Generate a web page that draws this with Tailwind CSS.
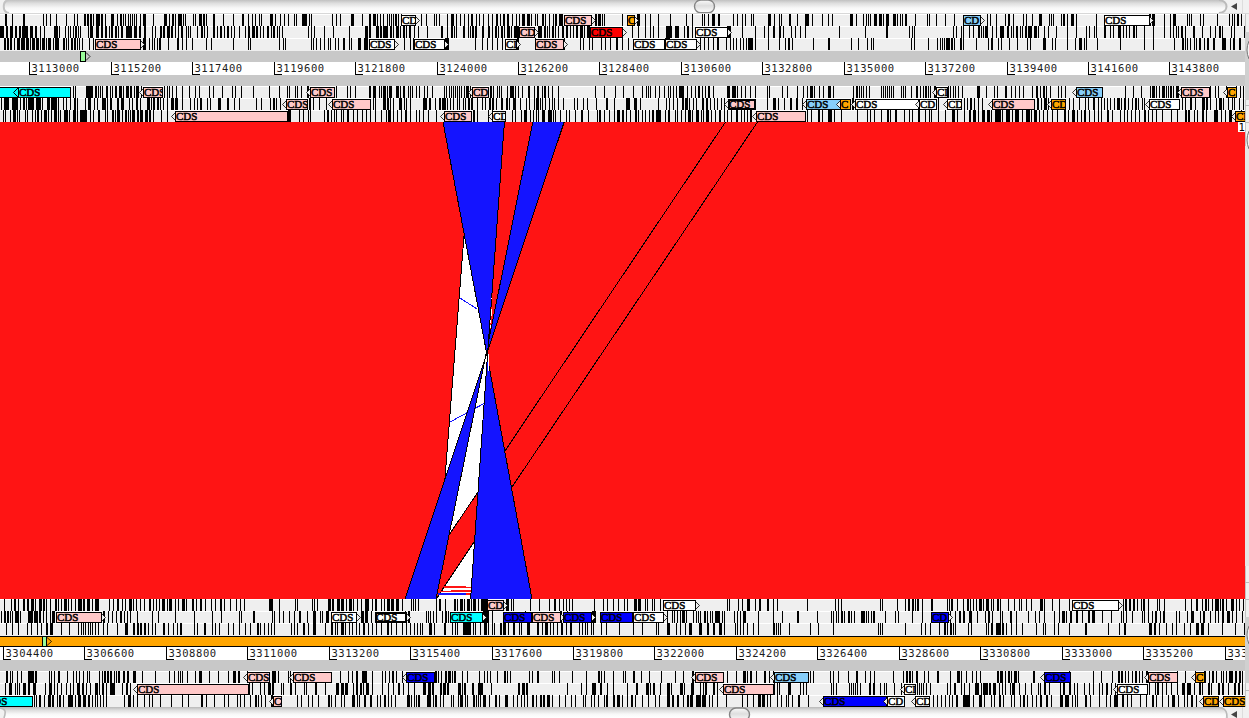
<!DOCTYPE html>
<html lang="en">
<head>
<meta charset="utf-8">
<title>Genome comparison</title>
<script src="https://cdn.jsdelivr.net/npm/@tailwindcss/browser@4"></script>
</head>
<body class="h-[718px] w-[1249px] overflow-hidden bg-[#efefef]">
<div class="flex h-[718px] flex-col">
  <header class="flex h-[14px] w-full border-b border-[#d8d8d8]">
    <svg class="block" width="1249" height="13" viewBox="0 0 1249 13">
      <defs>
        <linearGradient id="track" x1="0" y1="0" x2="0" y2="1"><stop offset="0" stop-color="#b8b8b8"/><stop offset=".3" stop-color="#dedede"/><stop offset=".65" stop-color="#f8f8f8"/><stop offset="1" stop-color="#fff"/></linearGradient>
        <linearGradient id="thumb" x1="0" y1="0" x2="0" y2="1"><stop offset="0" stop-color="#fafafa"/><stop offset=".45" stop-color="#dedede"/><stop offset="1" stop-color="#fff"/></linearGradient>
      </defs>
      <rect width="1249" height="13" fill="#f1f1f1"/>
      <path d="M9-1C1 0 1 12 9 13H1219C1229 12 1229 1 1219-1Z" fill="url(#track)"/>
      <path d="M9 0C2 1 2 12 9 13" fill="none" stroke="#c4c4c4" stroke-width="2"/>
      <path d="M1219 0C1229 1 1229 12 1219 13" fill="none" stroke="#bbb" stroke-width="2"/>
      <rect x="694.5" y="0" width="20" height="12.8" rx="6.4" fill="url(#thumb)" stroke="#858585" stroke-width="1.4"/>
      <path d="M1242.5 0V13" stroke="#ddd"/><path d="M1231 6.5L1237 3V10Z" fill="#444"/>
    </svg>
  </header>
  <main class="flex h-[693px]">
    <div class="flex w-[1245px] flex-col overflow-hidden">
      <div id="t0"></div><div id="t1"></div><div id="t2"></div>
      <div class="h-px bg-[#efefef]"></div>
      <div id="g0" class="h-[11px] bg-[#c8c8c8]"></div>
      <div id="r0" class="h-[13px] bg-white"></div>
      <div class="h-[11px] bg-[#c8c8c8]"></div>
      <div id="t3"></div><div id="t4"></div><div id="t5"></div>
      <section class="h-[477px]">
        <svg class="block" width="1245" height="477" viewBox="0 122 1245 477" shape-rendering="crispEdges">
          <rect y="122" width="1245" height="477" fill="#ff1414"/>
          <g stroke="#000" stroke-width="1">
            <path d="M725.5 122L405 600M757.5 122L436 600" fill="none"/>
            <path d="M464 236L445 484L449 535L478 492L484 400L489 372L488 345L492 310Z" fill="#fff" stroke="none"/>
            <path d="M474 542L437 599H471Z" fill="#fff" stroke="none"/>
            <path d="M464 236L444.5 484M449 535L478 492M474 542L436 599" fill="none"/>
          </g>
          <path d="M460 298L477 309M450 422L485 403" stroke="#1414ff" fill="none"/>
          <path d="M444 586H466V587H471V588H444ZM451 590H471V592H440V591H451ZM466 593H471V595H466Z" fill="#ff1414"/>
          <path d="M438 593H466V595H438Z" fill="#1414ff"/>
          <g fill="#1414ff" stroke="#000">
            <path d="M533 121H564.5L486.3 355L404.800 600H435.800L485.2 358Z"/>
            <path d="M442.800 121H504.500L487.500 355L470.500 600H532.200L487 355Z"/>
          </g>
          <path d="M488 354h1v17h-1zM491 313h1v3h-1zM491 298h1v1h-1zM490 325h1v3h-1z" fill="#fff"/>
          <rect x="1238" y="122" width="7" height="10" fill="#fff"/>
          <text x="1238.500" y="131" font-family="DejaVu Sans Mono" font-size="10.500">1</text>
        </svg>
      </section>
      <div id="t6"></div><div id="t7"></div><div id="t8"></div>
      <div class="h-px bg-[#efefef]"></div>
      <div id="g1" class="h-[11px] border-y border-black bg-[#ffa500]"></div>
      <div id="r1" class="h-[13px] bg-white"></div>
      <div class="h-[11px] bg-[#c8c8c8]"></div>
      <div id="t9"></div><div id="t10"></div><div id="t11"></div>
    </div>
    <aside class="w-[4px] bg-[#f0f0f0]">
      <svg class="block" width="4" height="693" viewBox="0 14 4 693">
        <path d="M.5 14V707" stroke="#c4c4c4"/>
        <rect y="32" width="4" height="68" fill="#d0d0d0"/><rect y="146" width="4" height="420" fill="#e6e6e6"/><rect y="617" width="4" height="66" fill="#d0d0d0"/>
        <path d="M4 41Q0 50 4 59M4 131Q0 140 4 149M4 626Q0 635 4 644" fill="#f4f4f4" stroke="#777"/>
        <path d="M0 105.500H4M0 122.500H4M0 582.500H4M0 599.500H4M0 690.500H4" stroke="#bbb"/>
      </svg>
    </aside>
  </main>
  <footer class="h-[11px] w-full">
    <svg class="block" width="1249" height="11" viewBox="0 0 1249 11">
      <rect width="1249" height="11" fill="#f1f1f1"/>
      <path d="M0 0H1222C1228 3 1227 8 1225 11H4C6 5 5 2 0 1Z" fill="url(#track)"/>
      <path d="M0 1C6 2 6 5 4 11M1219 0C1227 2 1227 6 1227 11" fill="none" stroke="#bbb" stroke-width="1.6"/>
      <rect x="729.5" y="1" width="20" height="13" rx="6.5" fill="url(#thumb)" stroke="#858585" stroke-width="1.4"/>
      <path d="M1242.500 0V11" stroke="#ddd"/><path d="M1231 7.500L1237 4V11Z" fill="#444"/>
    </svg>
  </footer>
</div>
<script>
// Stop codons per frame, in thirds of a pixel for three consecutive windows; ":n" gives a width in pixels.
const OFF = [[0,415,829],[0,400,829]];
const stops = [
 ["15:2 37 68 73 129 137 151 169 199 223 231 253:2 260:2 270:2 279 288:4 304:2 314 332:2 339 352 360:2 368 375 384 390 396 402 408 420 428:2 436 458 492:3 507 516:2 526 533:3 544 550 556 580 585 597:2 604 609:2 619 639 643 668 700 726:2 743 755 765 778 783 811:3 826 840 852 864 881 889 906:5 926 932 996 1007 1019 1053:3 1087 1107:2 1120:3 1132 1141 1149 1160 1166 1173 1179 1186:2 1195 1202",
  "18 32 58 64 73 96 108:3 123 135 146 159 169:2 182 192 205 220 231 242 247 254 263:2 275:2 290 302 311 322:3 336:3 348 361 367 382:2 390 403 413 420:2 433:3 442 540:2 550:3 560 566 620 666:3 690 706 730 765 812 830 860 868 880 892:3 908:2 953 965 981 991 1008 1013 1060:3 1078 1093 1098 1122:2 1145 1170:3 1178 1190 1220 1240",
  "10 63:2 70 81 103 110 117 124 135:3 150:3 163 170:2 178 192:3 205 212 220 227 232 258 295 300 320 347 375 474 482 502 529 537:2 551 581 591 610 630:2 637 661 666 672 695 702:2 713 727:3 740 800 960:2 970:2 976 1006 1022 1032:3 1073 1081 1087 1114 1122 1164 1200 1208 1215 1224:2 1237"],
 ["0:4 19:2 30:3 46:2 57:2 65:4 79:2 91:3 104:2 121 132 162:4 176 196 204 211 218 224:2 234 241 263 270:3 289:3 302:2 315:2 326 333:2 345:2 355 363:2 378:6 402:3 416:2 431:2 455 464 480:2 490:2 501:3 513:2 525 534 542:2 557 565 571 592 602:2 613 622 640:2 651 659:2 672 681:2 694 702 717 734 743:2 755:3 767:2 779 790 800:2 812 820:2 830 838 847 924 933 942 972 998 1048 1096:3 1107:2 1128:3 1140:2 1150:5 1170:2 1180 1187:3 1200 1208:2 1218 1228:2 1241 1249",
  "10 36 77:2 97 108:2 116 123 145:2 158 164 172:2 181:2 202:2 219:2 230 240:2 250 257:2 267 276:3 287 297:2 304:3 370:3 379 387:2 396 403 410:2 419 430 440:2 452:2 465 474 482:2 494:3 508 517:3 650 670 690 706 714 730 753:6 780:3 790 807 817:2 832 935:3 946 980 1020 1047 1058 1075:2 1093:2 1103 1127 1140 1155 1170",
  "31 109 172:2 241 248 256 373 382 396 402 420 433 447:2 456 462 469:3 490 502 514:3 523 534:2 545 552 561:2 573 580 588:2 596:2 604:2 616:3 627 646 656 680 715 742 770 780 796 801 826:2 842 853 866:3 881 890 900 912:2 920 944 972 1006 1023 1033 1040 1048 1056:2 1068 1093:2 1119 1143 1158 1170:2 1180 1206 1215 1245"],
 ["11:2 20:2 30:2 41 50:3 62:3 73 79:3 91 97:3 108:3 120 127:3 137 143:2 151 160 164:4 188:2 198 205 213:2 222:2 232 238 245 267 280 430:3 446 455 463 471 477:2 505 530:2 546 558 576 618 633 700 745 750 836 850 856 933 940 948 960 972 984 990 1005 1014 1029:2 1047 1052 1075:3 1093:4 1101 1212 1230 1240",
  "90:3 100 180 200 216 232 247 260 305:2 359 447 495 504 521 531 559 570 586 602:2 620 640 751:5 855 868 880 893 906:2 934 944 955 963 974 983 992 1000:4 1011 1021 1059 1091 1110 1120:2 1131 1195 1240:2",
  "0 67 88 114 125 132 246 256 296 324 332 338 344 351:3 360 366:2 375 393:2 402 440 478 487:2 508 516 540 563 593 603 641:3 668 678 715 737 749:3 764 772 804 874 945 973 1036 1058:2 1067 1075 1083 1094 1100 1111:2 1125 1134:2 1151:2 1180:4 1203 1211:2 1231:2"],
 ["219 225 257:3 267:4 277 285:2 294 300 307 319:2 331 336 346:2 358:3 370 378:3 389:2 401 408:3 422 492 500 507 515 528 547 567 584 597 627 640 665 697 704 724 758 807 836 860 866 884 892 902 920:2 1007 1040 1050 1064 1108:2 1119:3 1137 1143 1149:3 1160 1166:3 1187:3 1200 1208:2 1223 1230 1236 1245 1254",
  "3 12 26 37 52 86 94 101 107 113 119 126 132 139 147 154:3 165 225:2 235 245 251 258 275 285:4 295 301 310 321 340:2 357 367:2 380 387:2 400 410 430 541 567 600 623 655 682 692 699 706 719 732 748 758 766 773 782 793:4 803 815 827 839 850:2 862 871 880:2 894 935:3 950:4 965 978 989 1005 1020 1056 1062 1100 1115 1145 1165 1175 1185:3 1197 1212 1224 1240:3",
  "11 73 81:2 90 96 103 112 119 156 162 168 174 180 186 192 216 222 229 247 262:2 274 282 289:2 296 304 315:2 356 364 371 379 386 399 445:3 471 495 504 527:2 545 558 570 583 610 620:2 632 642:2 652 662 686 695 709 889 913 936 962 970:3 981 989 998:3 1010 1016 1022:2 1033 1041:3 1144 1158 1167 1192 1220 1234 1243"],
 ["3 12:3 22:2 35:3 46:3 60 70:2 77 83:3 94:3 107:2 115:3 127 141:3 153:2 160:4 175 190 199 210 221 226 231 254 263:3 283 290 305 309:3 321 331:2 351:2 364:3 388 397 408:2 420 440:3 452 460:2 470:2 481 489 500 514:3 524:3 547 571 583 592 601:2 620 630 653:3 660 680:2 701 717 767 784 811 818:2 827 839 926:2 940 956 978 1118 1126 1149:3 1160:2 1169 1180 1197:3 1211 1218 1230 1245",
  "25:4 41:2 59 73:2 80:3 91 97 106 114 126 132 145 151 159:2 169:2 186 202 211 222:2 230:2 242 257 262 272:2 282 295:3 315 333 343 357 363:3 374 381 391 402 410 418 430 443 478 487 503 517 542 573:2 597 634:3 642 656:3 676 730 753 763 775 785 800:2 810:3 822 833 844 860:2 873:2 884 896 905 917 927 1055 1075:3 1088 1108 1126:2 1142:2 1161",
  "68 73 328 405 413 424:2 436 448 459 625:2 635 646:3 656 719 733 751 769 777 791:2 808 816 824 834 844 854 865:3 877 884:2 896 908 917:2 926 938 946 1058 1068 1082:2 1098 1119:3 1130:2 1142 1161 1170:3 1183 1196 1208 1215 1231 1243"],
 ["9 15 31 39:3 50 58 75 82 95 104 111:2 122 131:3 143 152 162:3 175 181 193:4 208 219:3 230 240:2 247:5 270 280 293:2 316 320 335:2 346 352:3 365 374:2 383 390 397:3 410:2 421:3 434:3 448:2 458 483 500 865:3 898 910 925 931 972 981:2 993 1001 1008 1022 1030 1041:2 1059 1071 1086 1097 1111 1126 1142 1157 1165:3 1180 1191 1203 1215:2 1230",
  "4 13 25 38 63 175:2 185 219 230 290 301 319 327:3 346 354 362 370 380:2 388 398:3 407 414 421 436 452 462 479 498 502 519 546 551 556 568 582 596 607:3 622:2 633 645 659:2 670 682 690 703 712:2 722:4 734 749 759:2 779 787 798 810 820:3 832 843:3 858 864 873:3 888 899 911:2 926 937 948 963:2 979 986 996 1005:2 1175 1188 1210:2 1220 1240",
  "0:3 14 36 85 115 123 135 155 173:2 183 197:2 225 240 248 267:2 287 300 305 326 348 368:3 385 405 420:2 433:3 448 458:3 474:3 485 499:6 520 532:4 548 558:4 578 590:4 606 616:3 630 642 653 668 685 704:2 717 730:3 745 756 766:2 780 796 806 816 835:2 850 873 884 893 907 919 930 945:2 958 968 981 1000 1025 1044 1068:2 1078:2 1095 1105 1120:2 1132 1155:4 1175 1188 1200:3 1235"],
 ["12 34 42:2 55 70:2 82:2 92:3 104 116:3 128:2 137 150 164:2 175 184 192:3 204 213 225 233:4 250:2 262:3 275 285:4 327 339 351:2 365 374 386:3 398 407 419 433 448:2 460 467 478 487:3 500 508:3 524 535 547:3 558 575:2 588 600:2 615 633 645 660:2 673 691 707 719 732 807:3 817 838 885 890 935 943 950 984:3 997:2 1010:3 1022:3 1037 1048:3 1060 1072 1082 1094:3 1105 1116 1125:2 1143 1151 1162:3 1173:3 1188:3 1202:2 1215:3 1228 1238",
  "6 32 39 46 53 109 116 121 135 163:2 172 179:3 191 200:3 212 220:3 233 243:5 258:2 318:3 333 340 391 418 447 462:2 476 490 497 506 516 583 610 621 640 655 671 682 703:3 715:3 735 741 756 763 779 980 987 1013 1025 1041:3 1066 1077:2 1102:2 1119 1131 1221",
  "17 27 37 152 159 205 229 238:2 248:2 259 265:2 279 305:2 355 361 367:2 384 402 413:2 424 431 440 450:3 463 472:3 485 493 503:2 512 538 555 569 575 591 607 632:3 645 668 691 720 882 889:2 899:2 912:2 924 935 942:2 957 984 990 1005 1068 1086 1100:2 1120 1129:2 1137 1149 1157:4 1172 1180:2 1191 1205:3 1220 1230 1241"],
 ["4 11:2 20:2 30 36 45:3 53 60 84:3 93:2 101:3 112 118:2 130 137 149 157:3 308:2 325 336 348 360:2 373 380 390 411 455 474 526 583 636 664 718 723 760:2 816 821 836 848 866 881 896:2 922 938:3 960 966 977:2 985 1082:3 1095:3 1113 1225:2",
  "15 24:2 77 84 91 98 108 125 134:2 145 248:6 262 275 375 480:2 500 575:4 585 800 816 822 832 840 847:3 857 878 888 894 900 912:2 922 930 937 944:3 955:2 965 972 1003 1010 1021 1028:3 1073 1120 1145 1190:2 1251",
  "5 13 20 28 37:2 46 56:2 65 75 95:3 106 112 118 125 131 136 169 199 207 249 280 364 378 391:2 402:2 420:3 444 468 478:2 488 513 520 544:2 562 596 618 629 644 674 690 700:3 712 724:2 740:2 760 778:2 790:3 818 846 875 882 891 908 938 945 957 968 978:2 992 1003:2 1040 1050 1073 1085:3 1113 1122:2 1143 1158 1168 1180:2 1195:3 1210 1220 1240"],
 ["17 37 53 82 92 112 123 139:2 150:3 182 207 235 243 250 256 263 270 277 285 293 309 321 351 375:3 398:2 412:2 420:2 432:2 444 456 464 490:2 503 520 532 541:2 583 590 613:2 636 645 656 684 700 716 735 751 770:2 780 793 804 813 821 873 882 891 910:2 925 938:3 974 994:2 1005 1010 1022:3 1035 1046 1057 1068 1078 1089:2 1105 1116 1128 1142 1160:2 1173 1188 1200 1222:2 1236",
  "5 17 30 42 50 60 65 88:3 103 131 134 157 165 172 190:5 205:3 218 225 240 253:3 263 277 282 299:2 308:3 324 338:2 356 362 380:2 387 410:2 425 434:3 450 460 472 482:2 497 510:2 536 546 555 561 574 578 602 618 658 699 726 768 774 800:3 828 840 855 868:3 897:3 920:2 938 943 958:3 972 1004 1010 1020 1028 1040 1060 1074 1120:2 1128 1134 1139 1167 1229 1253",
  "12 148 153 159 229 277 289 304 330 345:2 355 362:2 372 379 416 426 471 477 485:2 500:2 508:3 519:2 530 547 560 580 620 641 649 676 688 720 768:2 837 869 885:2 959:2 966 974:2 990 1012 1028 1041 1065 1083 1100:3 1115:3 1137 1180 1218 1245"],
 ["19:2 31 37 50 63 83:3 92:3 105:2 148 154 161 173:2 200 220 229 236 250 262 268 297 305 312:2 321:2 329:2 342 349 355:2 368:2 381:2 399:3 425 464 507 523 534 540 546 560 585 597:2 602 628 654 683 698:2 705 714:2 740 817:3 826 834 863 870 1020 1043 1055 1067:2 1087:5 1117 1147 1154 1166 1176:2 1189 1211:3",
  "5 105:2 115 124 135:2 145:3 155 163:2 185 202 236 253 260 269 290 311 316 322 329 387 395 411:2 455 463 477 517 559 593:2 604 612 638 668 674 700:2 722 748 784 825 850 875:2 980 1007 1028:3 1041 1051:2 1068 1093:2 1107 1118 1230 1240",
  "3 13 26 57 82:2 108 124 135 193 221 232:2 240:2 250 260:2 285 298 325:2 362 384:3 397 412 430 442 453 505:2 513:3 527 537:2 547 555:3 567 611:2 721 793 815 848 868:2 876:2 888 897 910 919:2 930 940 950:2 1045 1069 1098 1125:2 1140 1148:2 1160 1175 1181 1190 1200:3 1210 1219:2 1231:2 1240"],
 ["15 27:3 45 52 58 68:2 76 83:2 98:2 105 135 148:3 163 172 183 197 209 218 232:3 245:2 258 271 284:3 296 307:2 318 330:5 365 379:2 389 748 757 781 791 804:3 816:2 843 848 870:2 885 913 919 946:2 975 1008:3 1023:3 1035:3 1060 1067:2 1079:2 1090 1099:3 1117 1145 1165 1180 1195:2 1220:4 1240:3",
  "10 25 41 70:3 84:3 95:2 121:2 130:3 141:2 175:3 186 193:2 215:2 235:4 245 272 355:2 365:3 377:2 502 542 557 575:4 600:2 621 640 682 707:2 737:3 750 760:2 780 800:3 812 841:3 852 872:3 900 910 915:2 938:2 952 1123 1130 1137 1165:3 1200 1210 1218",
  "7 13 20 60 66 72 78 85 94 120:2 132:2 153 166 172 196 216 263 269 276 283 290 302 355 362 376:2 395 406 419 439:4 455 463:5 480:2 491:3 509 520 527 543 550:3 570 589 607 627 632 646:2 660 694 703:2 720:2 735 743 765 781 792 810 820 831:2 845 858 960 977 985:2 1000 1010 1026 1043 1060:3 1075:4 1096 1110:2 1120 1136:2 1146 1167:2 1180:2 1196 1216:2 1226:2 1240"],
 ["101 109 118:2 132 143:3 156:2 170 177:2 190 205:3 214:2 226 235:3 250:3 265:2 275 285 292 300 308 318 372 383:3 398 410 433 447 455 480 514 546 564 603:2 617 641 673 685 710 719 732 750 765:2 774 783 795 812:2 890 903 925 936 955 985:2 994 1006 1022 1032 1055:3 1070 1078 1091:2 1110:2 1131 1140 1152:2 1165 1174 1184 1220:2 1228 1235 1241 1250",
  "20:2 28 34 41 48 55:2 80:3 91 98 105:2 120 130 153 160 174 181:3 196 202 220:2 227 234 240 248:2 256 266 286:2 297 315:3 340 350 363 371 382 397:2 407 420:2 430:2 440:3 455 477 495 513 525 548 554 572 582 593 612 618:2 640:2 650:3 665 682 693:2 706 726 745 765 778 800:3 815:2 830:2 848 860:2 870:3 887:5 905:4 926 936 950 977 1025 1041 1060 1075:3 1085:3 1100 1110 1130 1143 1157 1163 1175 1195:2 1225",
  "313 325 337 349 361 370 380:2 402:7 432 450:3 466 485 495 510:2 523 545 555 572 583:2 593 608 622 632:2 650:2 667 693:3 708:4 730 737 745 768:2 783 810 830 842 855:3 865 878:2 893 907 932 950 970:2 980 1000 1018 1030:3 1048 1065 1075 1085:2 1100"]
];
// Features: x, width, fill, direction, label, border width
const P='#ffc8c8',W='#ffffff',C='#00ffff',L='#87cefa',O='#ffa500',R='#ff0000',B='#0000ff';
const feats = [
 [[401,15,W,1,'CD'],[564,28,P,1],[627,8,O,1,'C'],[963,18,L,1,'CD'],[1104,46,W,1]],
 [[519,16,P,1,'CD'],[590,33,R,1],[695,33,W,1]],
 [[95,46,P,1],[369,26,W,1],[414,31,W,1],[505,12,W,1,'CD'],[535,29,P,1],[633,32,W,1],[665,32,W,1]],
 [[-2,73,C,-1,'CDS',1,18],[143,20,P,-1],[310,25,P,-1],[472,17,P,-1,'CD'],[936,12,W,-1,'CD'],[1076,27,L,-1],[1181,29,P,-1],[1227,10,O,-1,'C']],
 [[286,22,P,-1],[332,39,P,-1],[728,28,P,-1,'CDS',2],[806,35,L,-1],[840,11,O,-1,'C'],[855,64,W,-1],[919,18,W,-1,'CD'],[947,15,W,-1,'CD'],[992,43,P,-1],[1051,15,O,-1,'CD'],[1149,31,W,-1]],
 [[175,113,P,-1],[444,28,P,-1],[492,14,W,-1,'CD'],[756,50,P,-1],[1235,14,O,-1,'CD']],
 [[487,17,P,1,'CD'],[663,33,W,1],[1072,47,W,1]],
 [[56,46,P,1],[331,26,W,1],[375,32,W,1,'CDS',2],[450,33,C,1],[503,29,B,1],[532,29,P,1],[563,29,B,1],[600,33,B,1],[633,31,W,1],[931,18,B,1,'CD']],
 [],
 [[247,23,P,-1],[293,39,P,-1],[406,29,B,-1],[695,29,P,-1],[774,35,L,-1],[1044,27,B,-1],[1148,30,P,-1],[1195,10,O,-1,'C']],
 [[137,112,P,-1],[723,51,P,-1],[904,12,W,-1,'CD'],[1117,31,W,-1]],
 [[-2,35,C,0,'CDS',1,-18],[273,9,P,-1,'C'],[823,64,B,-1],[887,18,W,-1,'CD'],[915,15,W,-1,'CD'],[1203,16,O,-1,'CD'],[1223,26,O,-1]]
];
stops.forEach((segs,i)=>{
  const offs=OFF[i<6?0:1];
  let s='<rect width="1245" height="12" fill="#efefef"/><rect width="1245" height="1" fill="#fff"/>';
  let d='';
  segs.forEach((t,k)=>t.split(' ').forEach(v=>{
    const [a,w]=v.split(':').map(Number), x=offs[k]+Math.round(a/3);
    if(k<2 && x>=offs[k+1]) return;
    d+=`M${x} 0h${w||1}v12h-${w||1}z`;
  }));
  s+=`<path d="${d}" shape-rendering="crispEdges"/>`;
  feats[i].forEach(([x,w,f,dir,label='CDS',b=1,lx],n)=>{
    const id=`c${i}_${n}`, e=x+w;
    if(dir>0) s+=`<path d="M${e-.5} 2.500L${e+3.500} 6.500L${e-.5} 10.500" fill="#efefef" stroke="#000" stroke-width=".8"/>`;
    if(dir<0 && lx===undefined) s+=`<path d="M${x+.5} 2.500L${x-3.500} 6.500L${x+.5} 10.500" fill="#efefef" stroke="#000" stroke-width=".8"/>`;
    s+=`<rect x="${x+b/2}" y="${1+b/2}" width="${w-b}" height="${11-b}" fill="${f}" stroke="#000" stroke-width="${b}" shape-rendering="crispEdges"/>`;
    if(lx===18) s+='<path d="M18 2L13.500 6.500L18 11M18.500 1V12" fill="none" stroke="#000"/>';
    s+=`<clipPath id="${id}"><rect x="${x}" y="0" width="${w-1}" height="12"/></clipPath><text x="${lx===undefined?x+1:lx<0?-14:lx+1}" y="10" clip-path="url(#${id})" font-family="Liberation Serif" font-size="11" stroke="#000" stroke-width=".5">${label}</text>`;
  });
  document.getElementById('t'+i).innerHTML=`<svg class="block" width="1245" height="12" viewBox="0 0 1245 12">${s}</svg>`;
});
function ruler(id,start,first,n){
  let s='';
  for(let k=0;k<n;k++){
    const x=Math.round(first+k*81.44);
    s+=`<path d="M${x+.5} 0V12.500H${x+8}" fill="none" stroke="#000" shape-rendering="crispEdges"/><text x="${x+2.400}" y="10" font-family="DejaVu Sans Mono" font-size="10.500" letter-spacing=".58" fill="#1c1c1c">${start+2200*k}</text>`;
  }
  document.getElementById(id).innerHTML=`<svg class="block" width="1245" height="13">${s}</svg>`;
}
ruler('r0',3113000,29.300,15);
ruler('r1',3304400,2.900,16);
document.getElementById('g0').innerHTML='<svg class="block" width="100" height="11"><rect x="80.500" y=".5" width="5" height="10" fill="#98fb98" stroke="#000"/><path d="M86 1.500L90 5.500L86 9.500" fill="none" stroke="#000" stroke-width=".8"/></svg>';
document.getElementById('g1').innerHTML='<svg class="block" width="100" height="9"><rect x="42.500" y="-1" width="4" height="11" fill="#98fb98" stroke="#000"/><path d="M47 .5L51.500 4.500L47 8.500" fill="none" stroke="#000" stroke-width=".8"/></svg>';
</script>
</body>
</html>
